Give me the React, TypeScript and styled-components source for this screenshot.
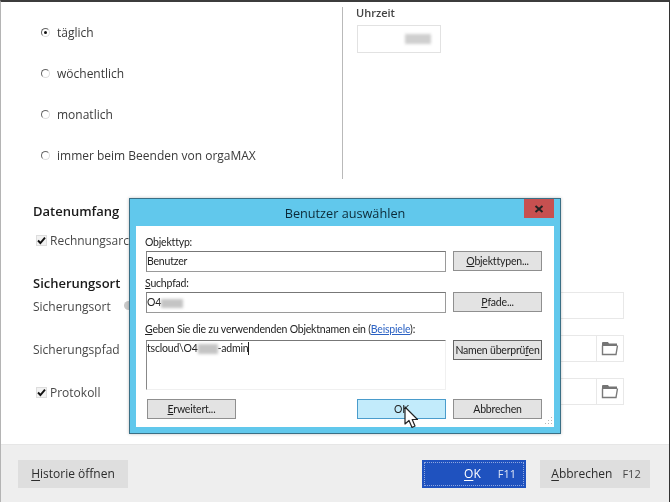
import styled, { createGlobalStyle } from 'styled-components';

const GlobalStyle = createGlobalStyle`
  html, body {
    margin: 0;
    padding: 0;
    background: #fff;
  }
  body {
    font-family: "Open Sans", "Liberation Sans", sans-serif;
  }
`;

const Window = styled.div`
  position: relative;
  width: 670px;
  height: 502px;
  overflow: hidden;
  display: flex;
  flex-direction: column;
  box-sizing: border-box;
  background: #fff;
  border-top: 2px solid #3c3c3c;
  border-left: 1px solid #b4b4b4;
  border-right: 1px solid #333;
  filter: blur(0.45px);
`;

const Body = styled.div`
  flex: 1;
  display: flex;
  flex-direction: column;
  padding: 5px 45px 0 32px;
  min-height: 0;
`;

const Schedule = styled.div`
  display: flex;
  height: 172px;
`;

const RadioColumn = styled.div`
  width: 310px;
  display: flex;
  flex-direction: column;
  gap: 23px;
  padding: 16px 0 0 8px;
  box-sizing: border-box;
  border-right: 1px solid #b9b9b9;
`;

const RadioRow = styled.div`
  display: flex;
  align-items: center;
  gap: 7px;
  height: 18px;
  font-size: 12px;
  color: #3a3a3a;
`;

const RadioDot = styled.span<{ $checked?: boolean }>`
  width: 9px;
  height: 9px;
  border-radius: 50%;
  box-sizing: border-box;
  border: 1px solid #666;
  border-right-color: #ddd;
  border-bottom-color: #ddd;
  display: flex;
  align-items: center;
  justify-content: center;

  &::after {
    content: '';
    width: 3px;
    height: 3px;
    border-radius: 50%;
    background: ${p => (p.$checked ? '#111' : 'transparent')};
  }
`;

const TimeColumn = styled.div`
  padding: 0 0 0 13px;
  margin-top: -1px;
  display: flex;
  flex-direction: column;
  gap: 6px;
`;

const SmallLabel = styled.div`
  font-size: 11px;
  line-height: 13px;
  font-weight: 600;
  color: #444;
`;

const TimeBox = styled.div`
  width: 84px;
  height: 28px;
  box-sizing: border-box;
  border: 1px solid #e2e2e2;
  margin-left: 1px;
  display: flex;
  align-items: center;
  justify-content: flex-end;
  padding-right: 9px;
`;

const Smudge = styled.span<{ $w: number; $h?: number; $c?: string }>`
  display: inline-block;
  width: ${p => p.$w}px;
  height: ${p => p.$h ?? 10}px;
  background: ${p => p.$c ?? '#cfcfcf'};
  filter: blur(1.5px);
  vertical-align: middle;
`;

const Heading = styled.div<{ $top: number }>`
  margin-top: ${p => p.$top}px;
  font-size: 13px;
  line-height: 18px;
  font-weight: 600;
  color: #1a1a1a;
`;

const CheckRow = styled.div<{ $top: number }>`
  margin-top: ${p => p.$top}px;
  display: flex;
  align-items: center;
  gap: 3px;
  padding-left: 3px;
  height: 16px;
  font-size: 12px;
  color: #484848;
  font-weight: 500;
  white-space: nowrap;
`;

const CheckBox = styled.span`
  width: 11px;
  height: 11px;
  flex: none;
  box-sizing: border-box;
  background: #f2f2f2;
  border: 1px solid #ddd;
  display: flex;
  align-items: center;
  justify-content: center;
`;

const FieldRow = styled.div<{ $top: number }>`
  margin-top: ${p => p.$top}px;
  height: 27px;
  display: flex;
  align-items: center;
`;

const FieldLabel = styled.div`
  width: 100px;
  flex: none;
  padding-top: 2px;
  font-size: 12px;
  font-weight: 500;
  color: #484848;
  white-space: nowrap;
`;

const ProtoLabel = styled(FieldLabel)`
  display: flex;
  align-items: center;
  gap: 3px;
  padding-left: 3px;
  box-sizing: border-box;
`;

const SourceKnob = styled.span`
  width: 9px;
  height: 9px;
  border-radius: 50%;
  background: #c8c8c8;
  margin-left: -9px;
  flex: none;
`;

const FieldBox = styled.div`
  flex: 1;
  height: 100%;
  box-sizing: border-box;
  border: 1px solid #e8e8e8;
  display: flex;
  justify-content: flex-end;
`;

const FolderCell = styled.div`
  width: 26px;
  border-left: 1px solid #e8e8e8;
  display: flex;
  align-items: center;
  justify-content: center;
`;

const Footer = styled.div`
  height: 58px;
  flex: none;
  background: #eeeeee;
  border-top: 1px solid #e6e6e6;
  box-sizing: border-box;
  display: flex;
  align-items: center;
  padding: 0 19px 0 17px;
`;

const FooterButton = styled.div<{ $primary?: boolean }>`
  height: 28px;
  width: ${p => (p.$primary ? 104 : 110)}px;
  box-sizing: border-box;
  display: flex;
  align-items: center;
  justify-content: ${p => (p.$primary ? 'flex-end' : 'center')};
  gap: ${p => (p.$primary ? 17 : 10)}px;
  padding-right: ${p => (p.$primary ? 10 : 0)}px;
  background: ${p => (p.$primary ? '#1f52bf' : '#dedede')};
  color: ${p => (p.$primary ? '#fff' : '#2c2c2c')};
  outline: ${p => (p.$primary ? '1px dotted #8ea6de' : 'none')};
  outline-offset: -3px;
  font-size: 12px;
  font-weight: 500;

  u {
    text-underline-offset: 2px;
  }
`;

const CancelButton = styled(FooterButton)`
  padding-left: 2px;
`;

const FKey = styled.span`
  font-size: 11px;
  opacity: 0.85;
`;

const Spacer = styled.div`
  flex: 1;
`;

const FooterGap = styled.div`
  width: 14px;
`;

const Dialog = styled.div`
  position: absolute;
  left: 128px;
  top: 196px;
  width: 432px;
  height: 236px;
  box-sizing: border-box;
  background: #61c8ec;
  border: 1px solid #3a6f85;
  box-shadow: 0 0 3px rgba(0, 0, 0, 0.25);
  display: flex;
  flex-direction: column;
  padding: 0 6px 6px 6px;
`;

const TitleBar = styled.div`
  position: relative;
  height: 27px;
  flex: none;
  display: flex;
  align-items: center;
  justify-content: center;
  font-size: 12.7px;
  color: #0c2a38;
`;

const CloseButton = styled.div`
  position: absolute;
  right: 0;
  top: 0;
  width: 30px;
  height: 19px;
  background: #c75050;
  display: flex;
  align-items: center;
  justify-content: center;
`;

const DialogBody = styled.div`
  position: relative;
  flex: 1;
  background: #fff;
  padding: 10px 12px 0 10px;
  font-family: Lato, "Liberation Sans", Arial, sans-serif;
  font-size: 10.5px;
  letter-spacing: -0.2px;
  color: #222;
`;

const DialogLabel = styled.div<{ $top?: number; $bottom?: number }>`
  height: 15px;
  line-height: 13px;
  margin-left: -1px;
  margin-top: ${p => p.$top ?? 0}px;
  margin-bottom: ${p => p.$bottom ?? 0}px;
  white-space: nowrap;
`;

const DialogRow = styled.div`
  display: flex;
  gap: 7px;
  align-items: flex-start;
`;

const TextInput = styled.div<{ $tall?: boolean }>`
  width: 300px;
  height: ${p => (p.$tall ? 50 : 21)}px;
  box-sizing: border-box;
  padding: ${p => (p.$tall ? '1px 0 0 0' : '3px 0 0 0')};
  line-height: 13px;
  border: 1px solid ${p => (p.$tall ? '#f0f0f0' : '#9a9a9a')};
  border-top-color: #777;
  border-left-color: #888;
  white-space: nowrap;
`;

const DialogButton = styled.div<{ $hot?: boolean }>`
  width: 89px;
  height: 20px;
  box-sizing: border-box;
  display: flex;
  align-items: center;
  justify-content: center;
  background: ${p => (p.$hot ? '#c2ebfb' : '#e3e3e3')};
  border: 1px solid ${p => (p.$hot ? '#4a9ccc' : '#8f8f8f')};
  white-space: nowrap;
`;

const CheckNamesButton = styled(DialogButton)`
  border-color: #666;
`;

const ButtonRow = styled.div`
  display: flex;
  align-items: center;
  margin-top: 9px;
  padding-left: 1px;
  gap: 7px;
`;

const Caret = styled.span`
  display: inline-block;
  width: 1px;
  height: 13px;
  background: #222;
  vertical-align: top;
`;

const HelpLink = styled.span`
  color: #2b62c4;
  text-decoration: underline;
`;

const Grip = styled.svg`
  position: absolute;
  right: 1px;
  bottom: 1px;
`;

const Cursor = styled.svg`
  position: absolute;
  left: 268px;
  top: 180px;
`;

const Check = () => (
  <svg width="9" height="9" viewBox="0 0 9 9">
    <path d="M1 4.5 L3.4 7 L8 1.6" fill="none" stroke="#111" strokeWidth="1.9" />
  </svg>
);

const Folder = () => (
  <svg width="18" height="15" viewBox="0 0 18 15">
    <path d="M1 2 Q1 1 2 1 H7 L8 2.5 H16 V5 H1 Z" fill="#757575" />
    <path d="M1.5 4.5 V13.5 H15 L16.5 4.5" fill="none" stroke="#7a7a7a" strokeWidth="1.4" />
  </svg>
);

const App = () => (
  <>
    <GlobalStyle />
    <Window>
      <Body>
        <Schedule>
          <RadioColumn>
            <RadioRow><RadioDot $checked />täglich</RadioRow>
            <RadioRow><RadioDot />wöchentlich</RadioRow>
            <RadioRow><RadioDot />monatlich</RadioRow>
            <RadioRow><RadioDot />immer beim Beenden von orgaMAX</RadioRow>
          </RadioColumn>
          <TimeColumn>
            <SmallLabel>Uhrzeit</SmallLabel>
            <TimeBox><Smudge $w={26} /></TimeBox>
          </TimeColumn>
        </Schedule>
        <Heading $top={23}>Datenumfang</Heading>
        <CheckRow $top={12}><CheckBox><Check /></CheckBox>Rechnungsarchiv</CheckRow>
        <Heading $top={26}>Sicherungsort</Heading>
        <FieldRow $top={0}>
          <FieldLabel>Sicherungsort</FieldLabel>
          <SourceKnob />
          <FieldBox />
        </FieldRow>
        <FieldRow $top={16}>
          <FieldLabel>Sicherungspfad</FieldLabel>
          <FieldBox><FolderCell><Folder /></FolderCell></FieldBox>
        </FieldRow>
        <FieldRow $top={16}>
          <ProtoLabel><CheckBox><Check /></CheckBox>Protokoll</ProtoLabel>
          <FieldBox><FolderCell><Folder /></FolderCell></FieldBox>
        </FieldRow>
      </Body>
      <Footer>
        <FooterButton><span><u>H</u>istorie öffnen</span></FooterButton>
        <Spacer />
        <FooterButton $primary><span><u>O</u>K</span><FKey>F11</FKey></FooterButton>
        <FooterGap />
        <CancelButton><span><u>A</u>bbrechen</span><FKey>F12</FKey></CancelButton>
      </Footer>
      <Dialog>
        <TitleBar>
          Benutzer auswählen
          <CloseButton>
            <svg width="10" height="8" viewBox="0 0 10 8">
              <path d="M1.5 1 L8.5 7 M8.5 1 L1.5 7" stroke="#222" strokeWidth="2" />
            </svg>
          </CloseButton>
        </TitleBar>
        <DialogBody>
          <DialogLabel>Objekttyp:</DialogLabel>
          <DialogRow>
            <TextInput>Benutzer</TextInput>
            <DialogButton><span><u>O</u>bjekttypen...</span></DialogButton>
          </DialogRow>
          <DialogLabel $top={5}><u>S</u>uchpfad:</DialogLabel>
          <DialogRow>
            <TextInput>O4<Smudge $w={22} $h={9} $c="#c4c4c4" /></TextInput>
            <DialogButton><span><u>P</u>fade...</span></DialogButton>
          </DialogRow>
          <DialogLabel $top={10} $bottom={2}><u>G</u>eben Sie die zu verwendenden Objektnamen ein (<HelpLink>Beispiele</HelpLink>):</DialogLabel>
          <DialogRow>
            <TextInput $tall>tscloud\O4<Smudge $w={20} $h={10} $c="#c4c4c4" />-admin<Caret /></TextInput>
            <CheckNamesButton><span>Namen überprü<u>f</u>en</span></CheckNamesButton>
          </DialogRow>
          <ButtonRow>
            <DialogButton><span><u>E</u>rweitert...</span></DialogButton>
            <Spacer />
            <DialogButton $hot>OK</DialogButton>
            <DialogButton>Abbrechen</DialogButton>
          </ButtonRow>
          <Grip width="10" height="10" viewBox="0 0 10 10">
            <path d="M8 1h1v1H8zM5 4h1v1H5zM8 4h1v1H8zM2 7h1v1H2zM5 7h1v1H5zM8 7h1v1H8z" fill="#b5b5b5" />
          </Grip>
          <Cursor width="16" height="24" viewBox="0 0 16 24">
            <path d="M1 1 V18 L5 14.5 L8 21.5 L11 20 L8.2 13.5 H13.5 Z" fill="#fff" stroke="#222" strokeWidth="1.2" strokeLinejoin="round" />
          </Cursor>
        </DialogBody>
      </Dialog>
    </Window>
  </>
);

export default App;
